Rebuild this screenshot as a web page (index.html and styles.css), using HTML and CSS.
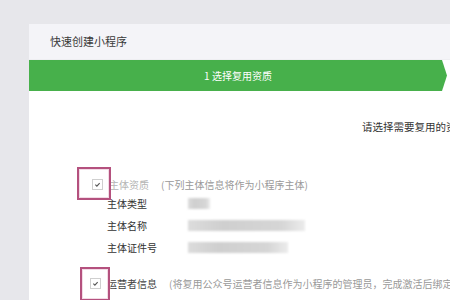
FILE: index.html
```html
<!DOCTYPE html>
<html lang="zh-CN">
<head>
    <meta charset="UTF-8">
    <title>快速创建小程序</title>
    <link rel="stylesheet" href="styles.css">
</head>
<body>
    <div class="page">
        <div class="card">
            <div class="card-hd">快速创建小程序</div>
            <div class="step">1 选择复用资质</div>
            <div class="card-bd">
                <p class="tip">请选择需要复用的资质</p>

                <div class="group">
                    <div class="check-row">
                        <span class="checkbox">
                            <svg viewBox="0 0 10 10" width="10" height="10"><path d="M2.6 5.2 L4.3 6.8 L7.4 3.4" fill="none" stroke="#555" stroke-width="1.2"/></svg>
                            <span class="mark mark-1"></span>
                        </span>
                        <span class="check-name light">主体资质</span>
                        <span class="check-desc">(下列主体信息将作为小程序主体)</span>
                    </div>
                    <div class="info-row">
                        <span class="info-label">主体类型</span>
                        <span class="blur blur-s"></span>
                    </div>
                    <div class="info-row">
                        <span class="info-label">主体名称</span>
                        <span class="blur blur-l"></span>
                    </div>
                    <div class="info-row">
                        <span class="info-label">主体证件号</span>
                        <span class="blur blur-m"></span>
                    </div>
                </div>

                <div class="group group-2">
                    <div class="check-row">
                        <span class="checkbox">
                            <svg viewBox="0 0 10 10" width="10" height="10"><path d="M2.6 5.2 L4.3 6.8 L7.4 3.4" fill="none" stroke="#555" stroke-width="1.2"/></svg>
                            <span class="mark mark-2"></span>
                        </span>
                        <span class="check-name">运营者信息</span>
                        <span class="check-desc">(将复用公众号运营者信息作为小程序的管理员，完成激活后绑定管理员)</span>
                    </div>
                </div>
            </div>
        </div>
    </div>
</body>
</html>
```

FILE: styles.css
```css
*{
    margin: 0;
    padding: 0;
}
html,body{
    height: 100%;
    overflow: hidden;
}
body{
    background: #e7e7eb;
    font-family: "Noto Sans CJK SC", "Noto Sans", sans-serif;
    color: #333;
}
.page{
    padding: 24px 0 0 29px;
    height: 100%;
    box-sizing: border-box;
}
.card{
    background: #fff;
    height: 100%;
    overflow: hidden;
}
.card-hd{
    height: 35px;
    line-height: 35px;
    padding-left: 21px;
    font-size: 11px;
    color: #3a3a3a;
    background: #f4f4f8;
    border-bottom: 1px solid #eeeef2;
}
.step{
    height: 31px;
    line-height: 31px;
    margin-right: 3px;
    background: #47b04b;
    color: #fff;
    font-size: 10px;
    text-align: center;
    clip-path: polygon(0 0, calc(100% - 5px) 0, 100% 50%, calc(100% - 5px) 100%, 0 100%);
}
.card-bd{
    padding-top: 28px;
}
.tip{
    padding-left: 333px;
    line-height: 16px;
    font-size: 10.5px;
    white-space: nowrap;
    color: #333;
}
.group{
    margin-top: 41px;
    padding-left: 63px;
    font-size: 10px;
}
.group-2{
    margin-top: 17px;
    padding-left: 61px;
}
.check-row{
    display: flex;
    align-items: center;
    height: 16px;
    white-space: nowrap;
}
.checkbox{
    position: relative;
    width: 9px;
    height: 9px;
    border: 1px solid #cfcfcf;
    background: #fff;
    display: flex;
    align-items: center;
    justify-content: center;
    flex-shrink: 0;
}
.checkbox svg{
    width: 9px;
    height: 9px;
}
.mark{
    position: absolute;
    border: 2px solid #b4517e;
    box-shadow: inset 0 0 0 1px #f3dbe6;
}
.mark-1{
    left: -16px;
    top: -13px;
    width: 30px;
    height: 29px;
}
.mark-2{
    left: -11px;
    top: -12px;
    width: 26px;
    height: 30px;
}
.check-name{
    margin-left: 6px;
    color: #444;
}
.check-name.light{
    color: #b5b5b5;
}
.check-desc{
    margin-left: 12px;
    color: #999;
}
.info-row{
    display: flex;
    align-items: center;
    height: 22px;
    padding-left: 15px;
}
.info-row:first-of-type{
    margin-top: 4px;
}
.info-label{
    width: 81px;
    color: #333;
}
.blur{
    height: 11px;
    background: linear-gradient(90deg, #dcdcdc, #cfcfcf 30%, #d6d6d6 80%, #ececec);
    filter: blur(1px);
}
.blur-s{
    width: 22px;
}
.blur-l{
    width: 117px;
}
.blur-m{
    width: 100px;
}
```
